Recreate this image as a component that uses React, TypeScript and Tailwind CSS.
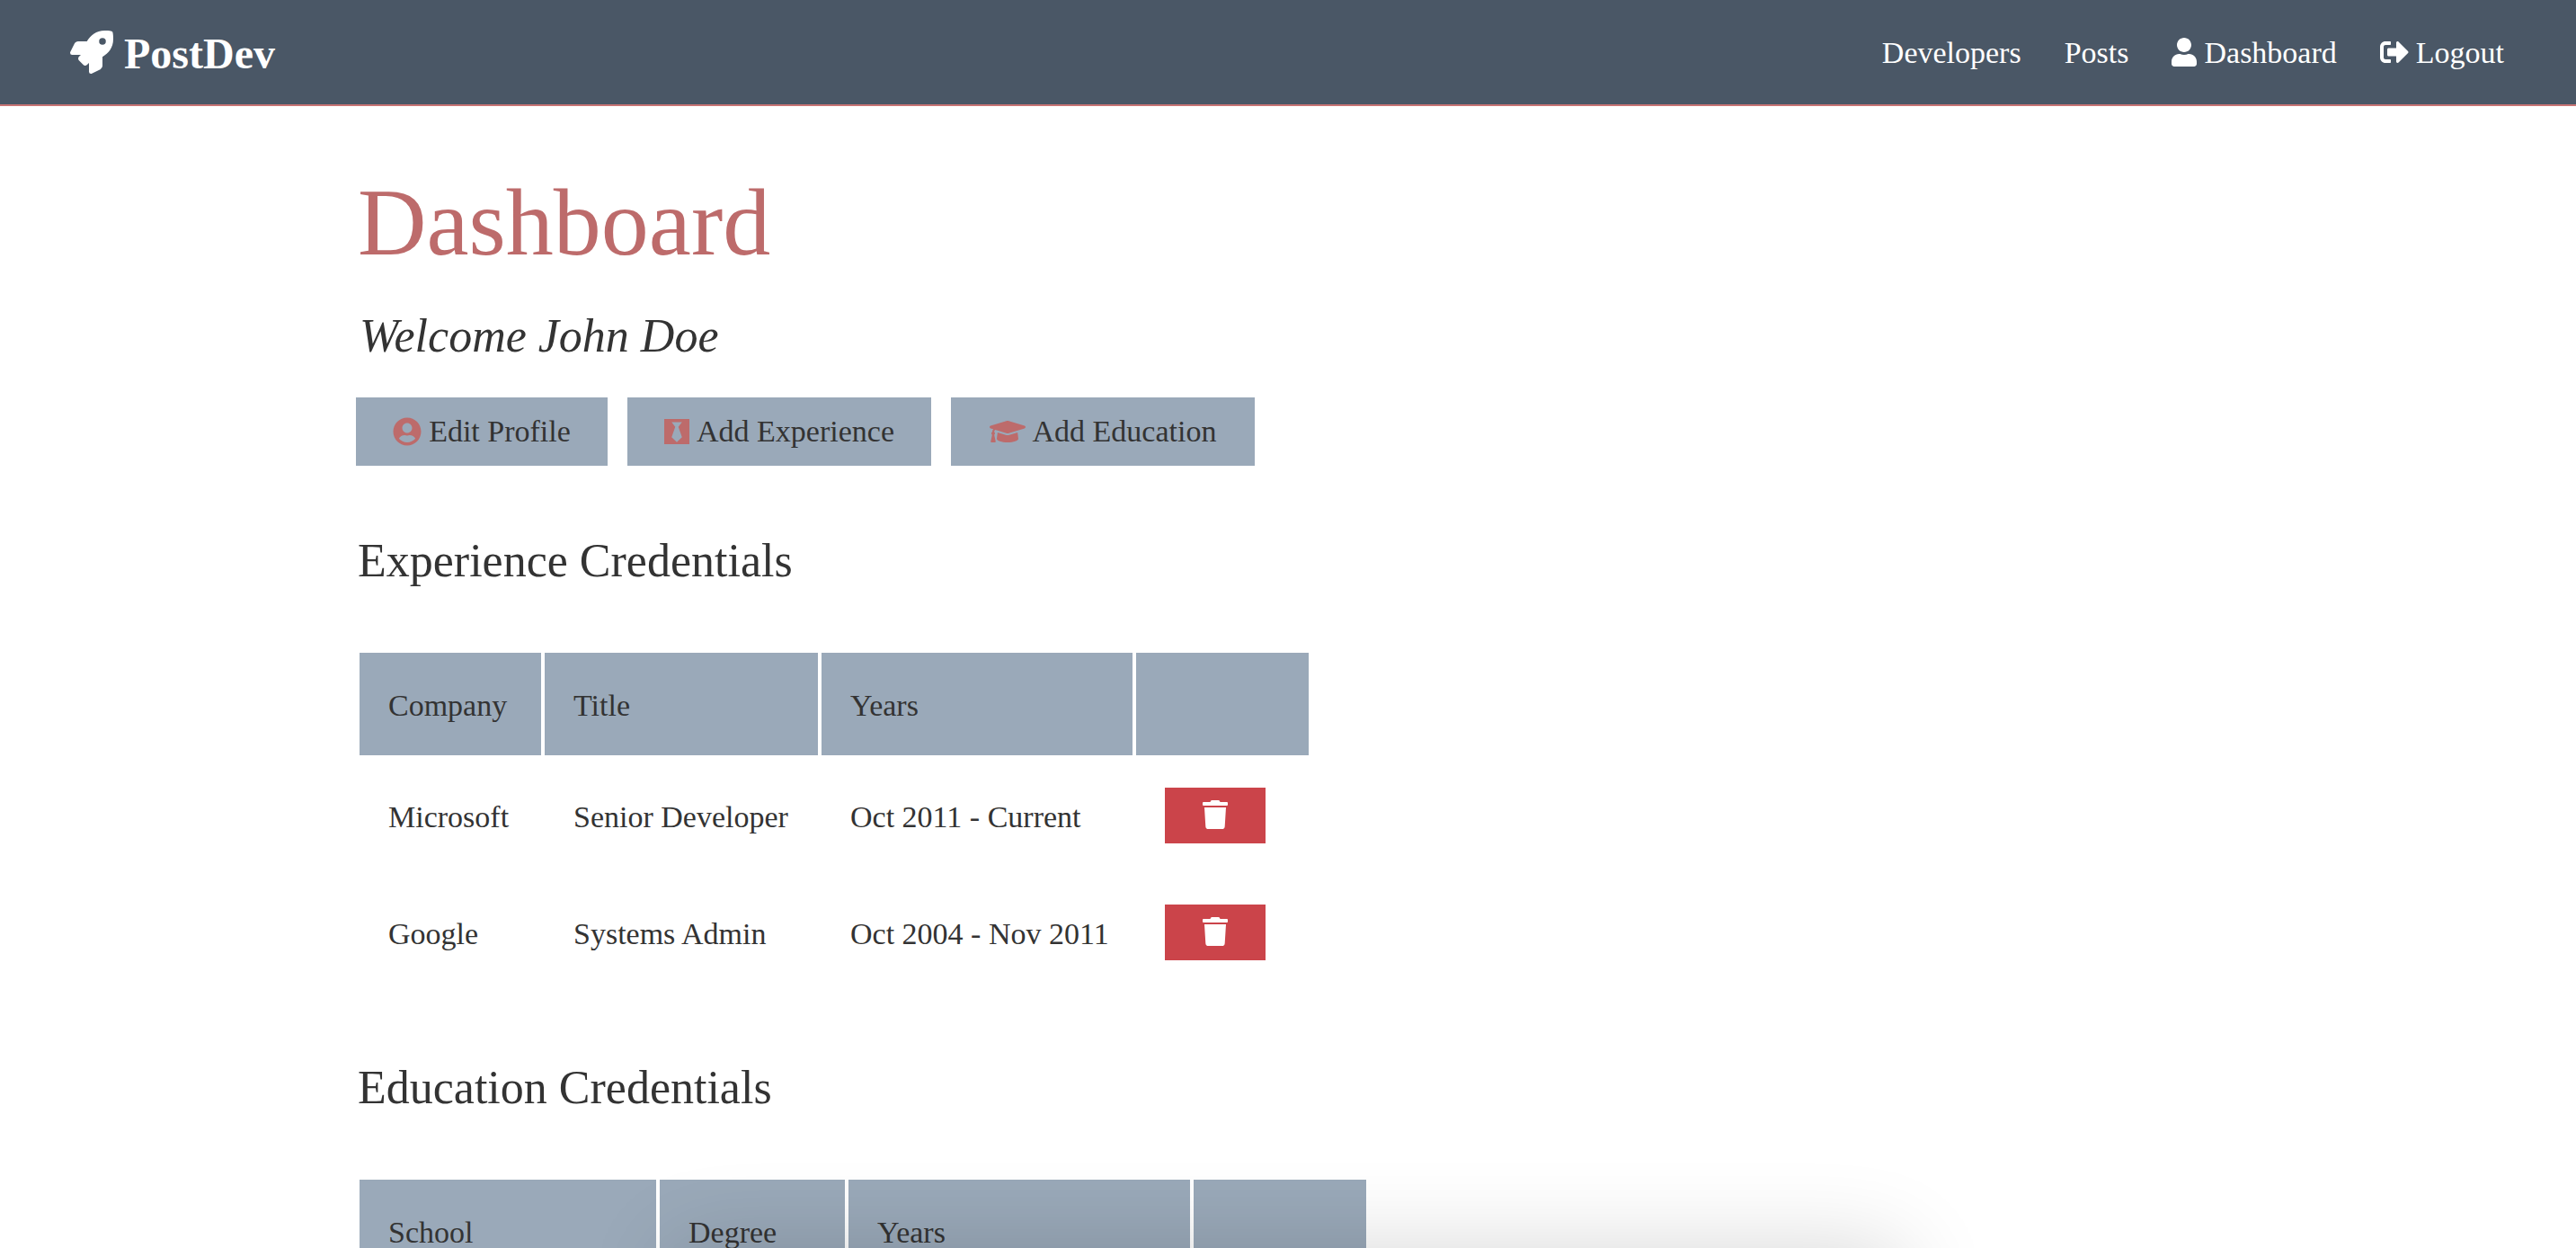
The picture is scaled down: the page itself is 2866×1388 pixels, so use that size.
import type { ReactNode } from "react";
import {
  FaBlackTie,
  FaGraduationCap,
  FaRocket,
  FaSignOutAlt,
  FaTrash,
  FaUser,
  FaUserCircle,
} from "react-icons/fa";

type Row = { name: string; role: string; years: string };

const experience: Row[] = [
  { name: "Microsoft", role: "Senior Developer", years: "Oct 2011 - Current" },
  { name: "Google", role: "Systems Admin", years: "Oct 2004 - Nov 2011" },
];

function NavLink({ icon, children }: { icon?: ReactNode; children: ReactNode }) {
  return (
    <a href="#" className="flex items-center gap-2">
      {icon}
      <span className="pt-0.5">{children}</span>
    </a>
  );
}

function ActionLink({
  icon,
  width,
  children,
}: {
  icon: ReactNode;
  width: string;
  children: ReactNode;
}) {
  return (
    <a
      href="#"
      className={`flex h-[76px] items-center justify-center gap-2 bg-[#9aa9b9] ${width}`}
    >
      {icon}
      <span>{children}</span>
    </a>
  );
}

function Credentials({
  title,
  headings,
  widths,
  rows,
}: {
  title: string;
  headings: string[];
  widths: string[];
  rows: Row[];
}) {
  return (
    <section>
      <h2 className="pl-0.5 text-[52px] leading-[60px]">{title}</h2>
      <table className="mt-[68px] border-separate border-spacing-1 text-left">
        <thead>
          <tr>
            {headings.map((heading, i) => (
              <th
                key={i}
                scope="col"
                className={`h-[114px] bg-[#9aa9b9] pt-1 pl-8 font-normal ${widths[i]}`}
              >
                {heading}
              </th>
            ))}
          </tr>
        </thead>
        <tbody>
          {rows.map((row) => (
            <tr key={row.name}>
              <td className="h-[126px] pt-1 pl-8">{row.name}</td>
              <td className="pt-1 pl-8">{row.role}</td>
              <td className="pt-1 pl-8">{row.years}</td>
              <td className="pl-8">
                <button
                  type="button"
                  aria-label={`Delete ${row.name}`}
                  className="flex h-[62px] w-28 items-center justify-center bg-[#cb444a] pb-0.5 text-white"
                >
                  <FaTrash className="h-8 w-7" />
                </button>
              </td>
            </tr>
          ))}
        </tbody>
      </table>
    </section>
  );
}

export default function App() {
  return (
    <div className="relative h-screen overflow-hidden bg-white font-['Liberation_Serif',serif] text-[34px] leading-[40px] whitespace-nowrap text-[#333333]">
      <header className="flex h-[118px] items-center justify-between border-b-2 border-[#c87474] bg-[#4a5766] pr-20 pl-[78px] text-white">
        <a href="#" className="flex items-center gap-3 text-[48px] leading-[56px] font-bold">
          <FaRocket className="size-12" />
          <span className="pt-1">PostDev</span>
        </a>
        <nav className="flex items-center gap-12">
          <NavLink>Developers</NavLink>
          <NavLink>Posts</NavLink>
          <NavLink icon={<FaUser className="h-8 w-7" />}>Dashboard</NavLink>
          <NavLink icon={<FaSignOutAlt className="size-8" />}>Logout</NavLink>
        </nav>
      </header>

      <main className="mr-auto ml-[396px]">
        <h1 className="pt-[70px] pl-0.5 text-[106px] leading-[120px] text-[#bd6b6b]">
          Dashboard
        </h1>
        <p className="mt-9 pl-1 text-[52px] leading-[60px] italic">Welcome John Doe</p>
        <div className="mt-[38px] flex gap-[22px]">
          <ActionLink width="w-[280px]" icon={<FaUserCircle className="size-8 text-[#bd6b6b]" />}>
            Edit Profile
          </ActionLink>
          <ActionLink width="w-[338px]" icon={<FaBlackTie className="h-8 w-7 text-[#bd6b6b]" />}>
            Add Experience
          </ActionLink>
          <ActionLink
            width="w-[338px]"
            icon={<FaGraduationCap className="h-8 w-10 text-[#bd6b6b]" />}
          >
            Add Education
          </ActionLink>
        </div>
        <div className="mt-[76px] flex flex-col gap-[76px]">
          <Credentials
            title="Experience Credentials"
            headings={["Company", "Title", "Years", ""]}
            widths={["w-[202px]", "w-[304px]", "w-[346px]", "w-[192px]"]}
            rows={experience}
          />
          <Credentials
            title="Education Credentials"
            headings={["School", "Degree", "Years", ""]}
            widths={["w-[330px]", "w-[206px]", "w-[380px]", "w-[192px]"]}
            rows={[]}
          />
        </div>
      </main>

      {/* Soft shadow rising from below the fold */}
      <div
        aria-hidden="true"
        className="pointer-events-none absolute top-full right-[750px] left-[750px] h-40 shadow-[0_0_100px_rgba(0,0,0,0.16)]"
      />
    </div>
  );
}
